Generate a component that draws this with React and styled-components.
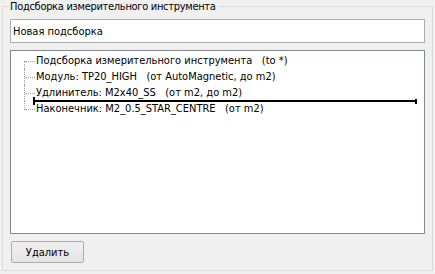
import React from 'react'
import styled, { createGlobalStyle } from 'styled-components'

const GlobalStyle = createGlobalStyle`
    html, body {
        margin: 0;
        padding: 0;
        background: #f0f0f0;
    }
`;

const items = [
    'Подсборка измерительного инструмента   (to *)',
    'Модуль: TP20_HIGH   (от AutoMagnetic, до m2)',
    'Удлинитель: M2x40_SS   (от m2, до m2)',
    'Наконечник: M2_0.5_STAR_CENTRE   (от m2)',
]

export default function App() {
  return (
    <>
        <GlobalStyle />
        <Page>
            <Group>
                <Title>Подсборка измерительного инструмента</Title>
                <NameInput defaultValue="Новая подсборка" />
                <Tree>
                    {items.map((text, i) => (
                        <Row key={i}>
                            <Branch $first={i === 0} $last={i === items.length - 1} />
                            <Label>{text}</Label>
                        </Row>
                    ))}
                    <DropMarker />
                </Tree>
                <Footer>
                    <Button>Удалить</Button>
                </Footer>
            </Group>
        </Page>
    </>
  )
}

const Page = styled.div`
    width: 435px;
    height: 274px;
    box-sizing: border-box;
    padding: 0 2px;
    background: #f0f0f0;
    font-family: "DejaVu Sans Condensed", "DejaVu Sans", sans-serif;
    font-size: 11px;
    color: #000;
`;

const Group = styled.fieldset`
    margin: 0;
    width: 431px;
    height: 271px;
    box-sizing: border-box;
    border: 1px solid #dcdcdc;
    padding: 6px 7px 7px 7px;
    display: flex;
    flex-direction: column;
    min-inline-size: 0;
`;

const Title = styled.legend`
    padding: 0 2px;
    margin-left: -2px;
    line-height: 13px;
    height: 13px;
    letter-spacing: -0.3px;
`;

const NameInput = styled.input`
    width: 415px;
    height: 24px;
    box-sizing: border-box;
    margin: 0;
    border: 1px solid #abadb3;
    background: #fff;
    padding: 0 0 0 2px;
    font-family: inherit;
    font-size: 11px;
    color: #000;
    outline: none;
`;

const Tree = styled.div`
    position: relative;
    margin-top: 7px;
    width: 415px;
    height: 184px;
    box-sizing: border-box;
    border: 1px solid #828790;
    background: #fff;
    padding-top: 2px;
`;

const Row = styled.div`
    display: flex;
    align-items: center;
    height: 16px;
`;

const Branch = styled.span`
    position: relative;
    width: 11px;
    height: 16px;
    margin-left: 13px;
    margin-right: 1px;
    flex: none;

    &::before {
        content: '';
        position: absolute;
        left: 1px;
        right: 0;
        top: 8px;
        border-top: 1px dotted #a0a0a0;
    }

    &::after {
        content: '';
        position: absolute;
        left: 0;
        top: ${p => (p.$first ? '8px' : '0')};
        height: ${p => (p.$last ? '9px' : p.$first ? '8px' : '16px')};
        border-left: 1px dotted #a0a0a0;
    }
`;

const Label = styled.span`
    white-space: pre;
    line-height: 16px;
`;

const DropMarker = styled.div`
    position: absolute;
    left: 22px;
    top: 49px;
    width: 384px;
    height: 2px;
    background: #000;

    &::before {
        content: '';
        position: absolute;
        left: 0;
        top: -3px;
        width: 2px;
        height: 8px;
        background: #000;
    }

    &::after {
        content: '';
        position: absolute;
        right: 0;
        top: -1px;
        width: 2px;
        height: 5px;
        background: #000;
    }
`;

const Footer = styled.div`
    display: flex;
    margin-top: 7px;
    padding-left: 1px;
`;

const Button = styled.button`
    width: 73px;
    height: 22px;
    margin: 0;
    padding: 0;
    border: 1px solid #acacac;
    border-radius: 2px;
    background: linear-gradient(#f0f0f0, #e5e5e5);
    font-family: inherit;
    font-size: 11px;
    color: #000;
`;
